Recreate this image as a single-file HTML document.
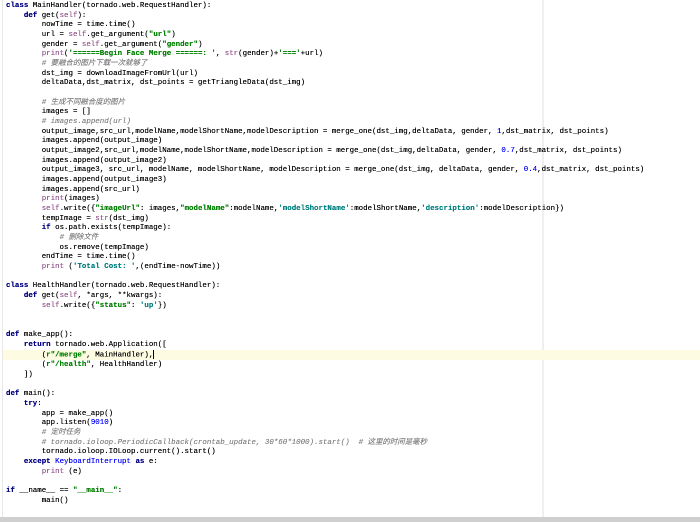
<!DOCTYPE html>
<html><head><meta charset="utf-8"><style>
html,body{margin:0;padding:0;background:#fff;width:700px;height:522px;overflow:hidden;position:relative}
.gut{position:absolute;left:2px;top:0;width:1px;height:518px;background:#e8e8e8}
.margin{position:absolute;left:542px;top:0;width:2px;height:518px;background:#efefef}
.hl{position:absolute;left:3px;top:350px;width:697px;height:10px;background:#fdfbe2}
.sb{position:absolute;left:0;top:517px;width:700px;height:5px;background:#cfcfcf}
pre{position:absolute;left:6px;top:2px;margin:0;font-family:"Liberation Mono","Noto Sans CJK SC",monospace;font-size:7.45px;line-height:9.67px;color:#000;text-shadow:0 0 0.3px currentColor}
.k{color:#000080;font-weight:bold}
.s{color:#94558d}
.t{color:#008080;font-weight:bold}
.g{color:#008000;font-weight:bold}
.c{color:#808080;font-style:italic}
.n{color:#0000ff}
.cur{display:inline-block;width:1px;height:9px;background:#000;vertical-align:middle}
</style></head><body>
<div class="gut"></div><div class="margin"></div><div class="hl"></div><div class="sb"></div>
<pre><span class="k">class</span> MainHandler(tornado.web.RequestHandler):
    <span class="k">def</span> get(<span class="s">self</span>):
        nowTime = time.time()
        url = <span class="s">self</span>.get_argument(<span class="g">"url"</span>)
        gender = <span class="s">self</span>.get_argument(<span class="g">"gender"</span>)
        <span class="s">print</span>(<span class="g">'======Begin Face Merge ======: '</span>, <span class="s">str</span>(gender)+<span class="g">'==='</span>+url)
        <span class="c"># 要融合的图片下载一次就够了</span>
        dst_img = downloadImageFromUrl(url)
        deltaData,dst_matrix, dst_points = getTriangleData(dst_img)

        <span class="c"># 生成不同融合度的图片</span>
        images = []
        <span class="c"># images.append(url)</span>
        output_image,src_url,modelName,modelShortName,modelDescription = merge_one(dst_img,deltaData, gender, <span class="n">1</span>,dst_matrix, dst_points)
        images.append(output_image)
        output_image2,src_url,modelName,modelShortName,modelDescription = merge_one(dst_img,deltaData, gender, <span class="n">0.7</span>,dst_matrix, dst_points)
        images.append(output_image2)
        output_image3, src_url, modelName, modelShortName, modelDescription = merge_one(dst_img, deltaData, gender, <span class="n">0.4</span>,dst_matrix, dst_points)
        images.append(output_image3)
        images.append(src_url)
        <span class="s">print</span>(images)
        <span class="s">self</span>.write({<span class="g">"imageUrl"</span>: images,<span class="g">"modelName"</span>:modelName,<span class="t">'modelShortName'</span>:modelShortName,<span class="t">'description'</span>:modelDescription})
        tempImage = <span class="s">str</span>(dst_img)
        <span class="k">if</span> os.path.exists(tempImage):
            <span class="c"># 删除文件</span>
            os.remove(tempImage)
        endTime = time.time()
        <span class="s">print</span> (<span class="t">'Total Cost: '</span>,(endTime-nowTime))

<span class="k">class</span> HealthHandler(tornado.web.RequestHandler):
    <span class="k">def</span> get(<span class="s">self</span>, *args, **kwargs):
        <span class="s">self</span>.write({<span class="g">"status"</span>: <span class="t">'up'</span>})


<span class="k">def</span> make_app():
    <span class="k">return</span> tornado.web.Application([
        (<span class="g">r"/merge"</span>, MainHandler),<span class="cur"></span>
        (<span class="g">r"/health"</span>, HealthHandler)
    ])

<span class="k">def</span> main():
    <span class="k">try</span>:
        app = make_app()
        app.listen(<span class="n">9010</span>)
        <span class="c"># 定时任务</span>
        <span class="c"># tornado.ioloop.PeriodicCallback(crontab_update, 30*60*1000).start()  # 这里的时间是毫秒</span>
        tornado.ioloop.IOLoop.current().start()
    <span class="k">except</span> <span class="n">KeyboardInterrupt</span> <span class="k">as</span> e:
        <span class="s">print</span> (e)

<span class="k">if</span> __name__ == <span class="g">"__main__"</span>:
        main()
</pre>
</body></html>
